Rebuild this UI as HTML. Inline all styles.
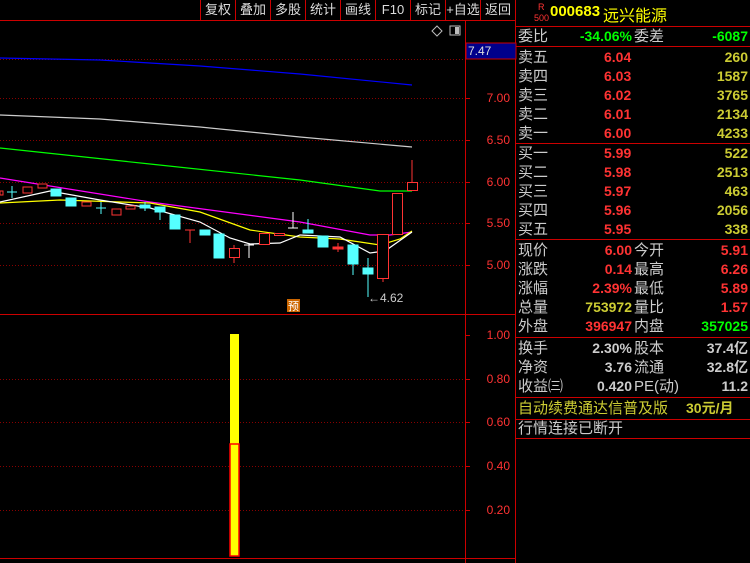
<!DOCTYPE html>
<html><head><meta charset="utf-8"><style>
body{margin:0;background:#000;width:750px;height:563px;overflow:hidden;font-family:"Liberation Sans","Noto Sans CJK SC",sans-serif;position:relative}
.tb{position:absolute;top:0;height:20px;color:#ddd;font-size:13px;line-height:20px;text-align:center;border-left:1px solid #c00}
.rp{position:absolute;left:516px;width:234px;font-size:15px}
.row{position:absolute;left:0;width:234px;height:19px;line-height:19px}
.row span{position:absolute;white-space:nowrap}
.hl{position:absolute;left:516px;width:234px;height:1px;background:#c00}
.ax{position:absolute;left:466px;width:44px;text-align:right;color:#f33;font-size:12px}
</style></head><body>
<div class="tb" style="left:200px;width:34px">复权</div>
<div class="tb" style="left:235px;width:34px">叠加</div>
<div class="tb" style="left:270px;width:34px">多股</div>
<div class="tb" style="left:305px;width:34px">统计</div>
<div class="tb" style="left:340px;width:34px">画线</div>
<div class="tb" style="left:375px;width:34px">F10</div>
<div class="tb" style="left:410px;width:34px">标记</div>
<div class="tb" style="left:445px;width:34px">+自选</div>
<div class="tb" style="left:480px;width:34px">返回</div>
<svg width="750" height="563" style="position:absolute;left:0;top:0">
<g stroke="#c00" fill="none">
<line x1="0" y1="20.5" x2="516" y2="20.5"/>
<line x1="465.5" y1="20" x2="465.5" y2="563"/>
<line x1="515.5" y1="0" x2="515.5" y2="563"/>
<line x1="0" y1="314.5" x2="516" y2="314.5"/>
<line x1="0" y1="558.5" x2="516" y2="558.5"/>
</g>
<g stroke="#800" stroke-dasharray="1,2">
<line x1="0" y1="59.5" x2="465" y2="59.5"/><line x1="0" y1="98.5" x2="465" y2="98.5"/><line x1="0" y1="140.5" x2="465" y2="140.5"/><line x1="0" y1="182.5" x2="465" y2="182.5"/><line x1="0" y1="223.5" x2="465" y2="223.5"/><line x1="0" y1="265.5" x2="465" y2="265.5"/>
<line x1="0" y1="379.5" x2="465" y2="379.5"/><line x1="0" y1="422.5" x2="465" y2="422.5"/><line x1="0" y1="466.5" x2="465" y2="466.5"/><line x1="0" y1="510.5" x2="465" y2="510.5"/>
</g>
<g stroke="#c00"><line x1="466" y1="98.5" x2="470" y2="98.5"/><line x1="466" y1="140.5" x2="470" y2="140.5"/><line x1="466" y1="182.5" x2="470" y2="182.5"/><line x1="466" y1="223.5" x2="470" y2="223.5"/><line x1="466" y1="265.5" x2="470" y2="265.5"/><line x1="466" y1="335.5" x2="470" y2="335.5"/><line x1="466" y1="379.5" x2="470" y2="379.5"/><line x1="466" y1="422.5" x2="470" y2="422.5"/><line x1="466" y1="466.5" x2="470" y2="466.5"/><line x1="466" y1="510.5" x2="470" y2="510.5"/></g>
<rect x="466" y="43" width="50" height="16" fill="#00008b" stroke="#c00"/>
<text x="468" y="55" fill="#ddd" font-size="12" font-family="Liberation Sans">7.47</text>
<path d="M432 31 l5 -5 l5 5 l-5 5z" stroke="#bbb" fill="none"/>
<rect x="450" y="26" width="10" height="9" fill="none" stroke="#bbb"/><rect x="455" y="27" width="4" height="7" fill="#bbb"/>
<g fill="none" stroke-width="1.2">
<polyline stroke="#00f" points="0,58 100,60 200,66 300,74 412,85"/>
<polyline stroke="#ccc" points="0,115 100,119 200,127 300,137 412,147"/>
<polyline stroke="#0f0" points="0,148 150,164 300,180 380,191 412,191"/>
<polyline stroke="#f0f" points="0,178 50,186 150,202 300,222 370,235 390,235 412,232"/>
<polyline stroke="#ff0" points="0,203 60,200 150,203 200,212 250,230 300,237 340,239 380,245 400,239 412,231"/>
<polyline stroke="#fff" points="0,202 50,191 100,200 150,208 200,222 230,238 250,244 280,243 300,235 340,237 370,253 385,251 412,232"/>
</g>
<g stroke="#f33" fill="#000">
<rect x="0" y="191" width="3" height="4"/>
<rect x="23" y="187" width="9" height="6"/><rect x="38" y="184" width="9" height="4"/>
<rect x="82" y="202" width="9" height="4"/><rect x="112" y="209" width="9" height="6"/><rect x="126" y="206" width="9" height="3"/>
<line x1="190" y1="230" x2="190" y2="243"/><line x1="185" y1="230" x2="195" y2="230"/>
<line x1="234" y1="245" x2="234" y2="263"/><rect x="229.5" y="248.5" width="10" height="9"/>
<rect x="259.5" y="233.5" width="10" height="11"/><rect x="274.5" y="233.5" width="10" height="2"/>
<line x1="338" y1="243" x2="338" y2="252"/><rect x="333" y="247" width="10" height="2" fill="#f33"/>
<rect x="377.5" y="234.5" width="11" height="44"/><line x1="383" y1="278" x2="383" y2="282"/>
<rect x="392.5" y="193.5" width="10" height="41"/>
<line x1="412" y1="160" x2="412" y2="182"/><rect x="407.5" y="182.5" width="10" height="8"/>
</g>
<g stroke="#5ff" fill="#5ff">
<line x1="12" y1="186" x2="12" y2="198"/><line x1="7" y1="192" x2="17" y2="192"/>
<rect x="51" y="189" width="10" height="7"/><rect x="66" y="198" width="10" height="8"/>
<line x1="101" y1="202" x2="101" y2="214"/><line x1="96" y1="208" x2="106" y2="208"/>
<line x1="145" y1="202" x2="145" y2="211"/><rect x="140" y="205" width="10" height="3"/>
<rect x="155" y="207" width="10" height="5"/><line x1="160" y1="212" x2="160" y2="220"/>
<rect x="170" y="215" width="10" height="14"/>
<rect x="200" y="230" width="10" height="5"/>
<rect x="214" y="234" width="10" height="24"/>
<line x1="308" y1="219" x2="308" y2="233"/><rect x="303" y="230" width="10" height="3"/>
<rect x="318" y="236" width="10" height="11"/>
<rect x="348" y="245" width="10" height="19"/><line x1="353" y1="264" x2="353" y2="275"/>
<rect x="363" y="268" width="10" height="6"/><line x1="368" y1="258" x2="368" y2="297"/>
</g>
<g stroke="#fff"><line x1="249" y1="243" x2="249" y2="258"/><line x1="244" y1="245" x2="254" y2="245"/><line x1="293" y1="212" x2="293" y2="228"/><line x1="288" y1="228" x2="298" y2="228"/></g>
<text x="368" y="302" fill="#ccc" font-size="12" font-family="Liberation Sans">←4.62</text>
<rect x="287" y="299" width="13" height="13" fill="#c60"/>
<text x="288" y="310" fill="#fff" font-size="11" font-family="Noto Sans CJK SC">预</text>
<rect x="230" y="334" width="9" height="222" fill="#ff0"/>
<rect x="230" y="444" width="9" height="112" fill="#ff0" stroke="#f00" stroke-width="1.5"/>
</svg>
<div class="ax" style="top:91px">7.00</div><div class="ax" style="top:133px">6.50</div><div class="ax" style="top:175px">6.00</div><div class="ax" style="top:216px">5.50</div><div class="ax" style="top:258px">5.00</div>
<div class="ax" style="top:328px">1.00</div><div class="ax" style="top:372px">0.80</div><div class="ax" style="top:415px">0.60</div><div class="ax" style="top:459px">0.40</div><div class="ax" style="top:503px">0.20</div>
<div class="rp" style="top:0;height:26px">
<span style="position:absolute;left:22px;top:3px;color:#f33;font-size:9px;line-height:9px">R</span>
<span style="position:absolute;left:18px;top:13px;color:#f33;font-size:9px">500</span>
<span style="position:absolute;left:34px;top:3px;color:#ff0;font-size:15px;font-weight:bold">000683</span>
<span style="position:absolute;left:87px;top:2px;color:#ff0;font-size:16px">远兴能源</span></div>
<div class="hl" style="top:26px"></div><div class="hl" style="top:46px"></div><div class="hl" style="top:143px"></div><div class="hl" style="top:239px"></div><div class="hl" style="top:337px"></div><div class="hl" style="top:397px"></div><div class="hl" style="top:419px"></div><div class="hl" style="top:438px"></div>
<div class="rp" style="top:0">
<div class="row" style="top:27px"><span style="left:2px;color:#ccc">委比</span><span style="right:118px;color:#0f0;font-weight:bold;font-size:14px">-34.06%</span><span style="left:118px;color:#ccc">委差</span><span style="right:2px;color:#0f0;font-weight:bold;font-size:14px">-6087</span></div>
<div class="row" style="top:48px"><span style="left:2px;color:#ccc">卖五</span><span style="left:88px;color:#f33;font-weight:bold;font-size:14px">6.04</span><span style="right:2px;color:#cc3;font-weight:bold;font-size:14px">260</span></div>
<div class="row" style="top:67px"><span style="left:2px;color:#ccc">卖四</span><span style="left:88px;color:#f33;font-weight:bold;font-size:14px">6.03</span><span style="right:2px;color:#cc3;font-weight:bold;font-size:14px">1587</span></div>
<div class="row" style="top:86px"><span style="left:2px;color:#ccc">卖三</span><span style="left:88px;color:#f33;font-weight:bold;font-size:14px">6.02</span><span style="right:2px;color:#cc3;font-weight:bold;font-size:14px">3765</span></div>
<div class="row" style="top:105px"><span style="left:2px;color:#ccc">卖二</span><span style="left:88px;color:#f33;font-weight:bold;font-size:14px">6.01</span><span style="right:2px;color:#cc3;font-weight:bold;font-size:14px">2134</span></div>
<div class="row" style="top:124px"><span style="left:2px;color:#ccc">卖一</span><span style="left:88px;color:#f33;font-weight:bold;font-size:14px">6.00</span><span style="right:2px;color:#cc3;font-weight:bold;font-size:14px">4233</span></div>
<div class="row" style="top:144px"><span style="left:2px;color:#ccc">买一</span><span style="left:88px;color:#f33;font-weight:bold;font-size:14px">5.99</span><span style="right:2px;color:#cc3;font-weight:bold;font-size:14px">522</span></div>
<div class="row" style="top:163px"><span style="left:2px;color:#ccc">买二</span><span style="left:88px;color:#f33;font-weight:bold;font-size:14px">5.98</span><span style="right:2px;color:#cc3;font-weight:bold;font-size:14px">2513</span></div>
<div class="row" style="top:182px"><span style="left:2px;color:#ccc">买三</span><span style="left:88px;color:#f33;font-weight:bold;font-size:14px">5.97</span><span style="right:2px;color:#cc3;font-weight:bold;font-size:14px">463</span></div>
<div class="row" style="top:201px"><span style="left:2px;color:#ccc">买四</span><span style="left:88px;color:#f33;font-weight:bold;font-size:14px">5.96</span><span style="right:2px;color:#cc3;font-weight:bold;font-size:14px">2056</span></div>
<div class="row" style="top:220px"><span style="left:2px;color:#ccc">买五</span><span style="left:88px;color:#f33;font-weight:bold;font-size:14px">5.95</span><span style="right:2px;color:#cc3;font-weight:bold;font-size:14px">338</span></div>
<div class="row" style="top:241px"><span style="left:2px;color:#ccc">现价</span><span style="right:118px;color:#f33;font-weight:bold;font-size:14px">6.00</span><span style="left:118px;color:#ccc">今开</span><span style="right:2px;color:#f33;font-weight:bold;font-size:14px">5.91</span></div>
<div class="row" style="top:260px"><span style="left:2px;color:#ccc">涨跌</span><span style="right:118px;color:#f33;font-weight:bold;font-size:14px">0.14</span><span style="left:118px;color:#ccc">最高</span><span style="right:2px;color:#f33;font-weight:bold;font-size:14px">6.26</span></div>
<div class="row" style="top:279px"><span style="left:2px;color:#ccc">涨幅</span><span style="right:118px;color:#f33;font-weight:bold;font-size:14px">2.39%</span><span style="left:118px;color:#ccc">最低</span><span style="right:2px;color:#f33;font-weight:bold;font-size:14px">5.89</span></div>
<div class="row" style="top:298px"><span style="left:2px;color:#ccc">总量</span><span style="right:118px;color:#cc3;font-weight:bold;font-size:14px">753972</span><span style="left:118px;color:#ccc">量比</span><span style="right:2px;color:#f33;font-weight:bold;font-size:14px">1.57</span></div>
<div class="row" style="top:317px"><span style="left:2px;color:#ccc">外盘</span><span style="right:118px;color:#f33;font-weight:bold;font-size:14px">396947</span><span style="left:118px;color:#ccc">内盘</span><span style="right:2px;color:#0f0;font-weight:bold;font-size:14px">357025</span></div>
<div class="row" style="top:339px"><span style="left:2px;color:#ccc">换手</span><span style="right:118px;color:#ccc;font-weight:bold;font-size:14px">2.30%</span><span style="left:118px;color:#ccc">股本</span><span style="right:2px;color:#ccc;font-weight:bold;font-size:14px">37.4亿</span></div>
<div class="row" style="top:358px"><span style="left:2px;color:#ccc">净资</span><span style="right:118px;color:#ccc;font-weight:bold;font-size:14px">3.76</span><span style="left:118px;color:#ccc">流通</span><span style="right:2px;color:#ccc;font-weight:bold;font-size:14px">32.8亿</span></div>
<div class="row" style="top:377px"><span style="left:2px;color:#ccc">收益㈢</span><span style="right:118px;color:#ccc;font-weight:bold;font-size:14px">0.420</span><span style="left:118px;color:#ccc">PE(动)</span><span style="right:2px;color:#ccc;font-weight:bold;font-size:14px">11.2</span></div>
<div class="row" style="top:399px"><span style="left:2px;color:#cc3">自动续费通达信普及版</span><span style="left:170px;color:#cc3;font-weight:bold;font-size:14px">30元/月</span></div>
<div class="row" style="top:419px"><span style="left:2px;color:#ccc">行情连接已断开</span></div>
</div>
</body></html>
